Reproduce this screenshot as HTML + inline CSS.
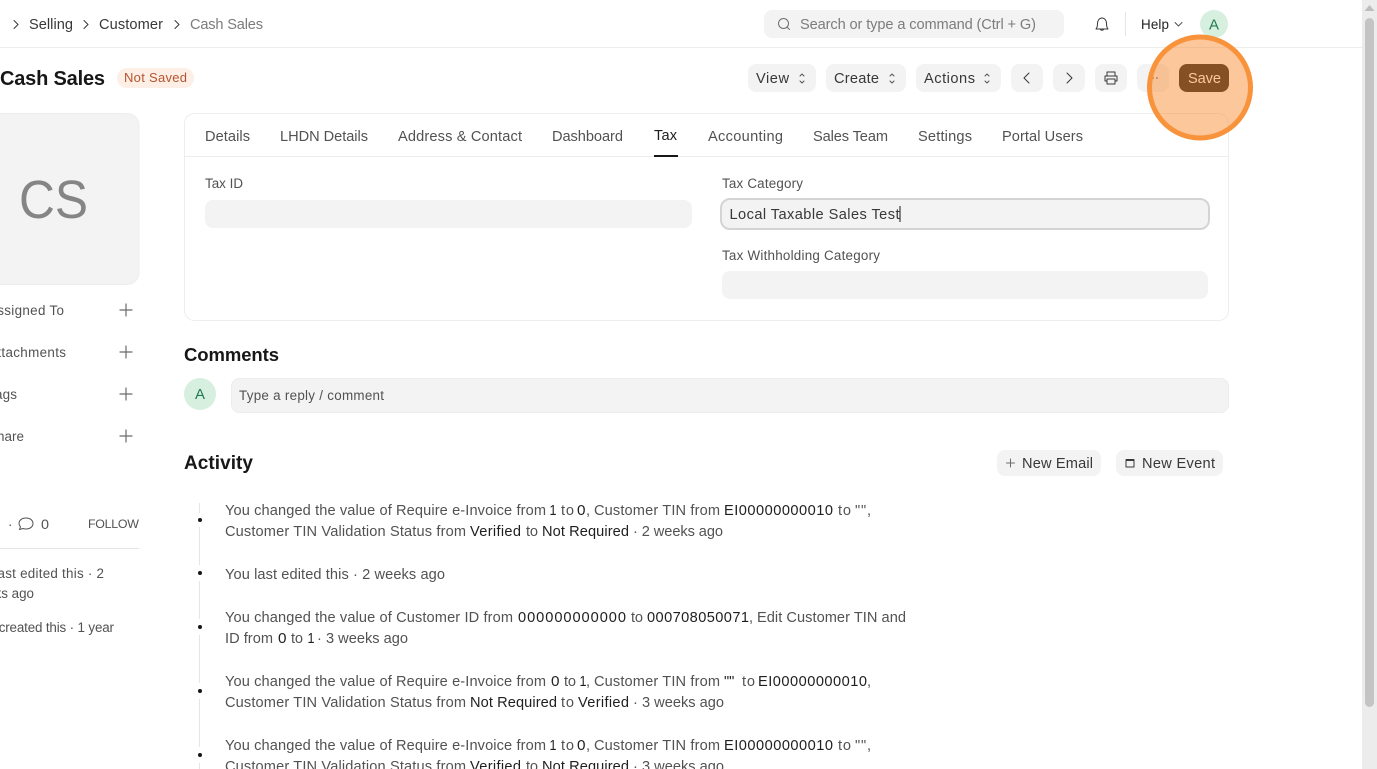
<!DOCTYPE html>
<html><head><meta charset="utf-8"><title>Cash Sales</title>
<style>
html,body{margin:0;padding:0;background:#fff;overflow:hidden;width:1377px;height:769px}
svg{display:block;position:absolute;left:0;top:0}
text{font-family:"Liberation Sans",sans-serif;font-size:14.6px;fill:#525252}
.d{fill:#1f1f1f}
.k{fill:#383838}
.g{fill:#7c7c7c}
.s{font-size:13.4px}
.b{font-weight:700;fill:#171717}
.i{fill:none;stroke:#525252;stroke-width:1;stroke-linecap:round;stroke-linejoin:round}
.f{fill:#f3f3f3}
</style></head><body>
<svg width="1377" height="769" viewBox="0 0 1377 769" xmlns="http://www.w3.org/2000/svg">
<rect width="1377" height="769" fill="#fff"/>
<!-- navbar -->
<rect x="0" y="47" width="1362" height="1" fill="#ededed"/>
<path class="i" style="stroke:#383838" d="M14 20.500l4 4-4 4M84 20.500l4 4-4 4M175 20.500l4 4-4 4"/>
<text class="k" x="29" y="29" textLength="44" lengthAdjust="spacing">Selling</text>
<text class="k" x="99" y="29" textLength="64" lengthAdjust="spacing">Customer</text>
<text class="g" x="190" y="29" textLength="73" lengthAdjust="spacing">Cash Sales</text>
<rect class="f" x="764" y="10" width="300" height="28" rx="8"/>
<circle class="i" cx="783.500" cy="23.500" r="5" style="stroke:#6f6f6f"/><path class="i" style="stroke:#6f6f6f" d="M787 27l2.500 2.500"/>
<text class="g" x="800" y="29" textLength="236" lengthAdjust="spacing">Search or type a command (Ctrl + G)</text>
<path class="i" style="stroke:#383838" d="M1096 29h12c-1.300-1.500-1.500-3-1.500-5.500 0-3-1.800-5.500-4.500-5.500s-4.500 2.500-4.500 5.500c0 2.500-.2 4-1.500 5.500zM1100.500 29.500c.3 1 2.700 1 3 0"/>
<rect x="1125" y="12" width="1" height="24" fill="#e5e5e5"/>
<text class="d" x="1141" y="29" textLength="28" lengthAdjust="spacing" style="font-size:13.400px">Help</text>
<path class="i" d="M1175 22.500l3.500 3.500 3.500-3.500"/>
<circle cx="1214" cy="24" r="14" fill="#d6efdf"/>
<text x="1209" y="29.500" textLength="10" lengthAdjust="spacingAndGlyphs" style="fill:#217a50">A</text>
<!-- page head -->
<text class="b" x="0" y="85" textLength="105" lengthAdjust="spacing" style="font-size:20px">Cash Sales</text>
<rect x="117" y="68" width="77" height="20" rx="10" fill="#fdeee6"/>
<text x="124" y="82" textLength="63" lengthAdjust="spacing" style="font-size:13px;fill:#b4562f">Not Saved</text>
<rect class="f" x="748" y="64" width="68" height="28" rx="8"/>
<text class="k" x="756" y="83" textLength="33" lengthAdjust="spacing">View</text>
<path class="i" d="M800 76l2-2 2 2M800 81l2 2 2-2"/>
<rect class="f" x="826" y="64" width="80" height="28" rx="8"/>
<text class="k" x="834" y="83" textLength="45" lengthAdjust="spacing">Create</text>
<path class="i" d="M890 76l2-2 2 2M890 81l2 2 2-2"/>
<rect class="f" x="916" y="64" width="85" height="28" rx="8"/>
<text class="k" x="924" y="83" textLength="51" lengthAdjust="spacing">Actions</text>
<path class="i" d="M985 76l2-2 2 2M985 81l2 2 2-2"/>
<rect class="f" x="1011" y="64" width="32" height="28" rx="8"/>
<path class="i" style="stroke:#383838" d="M1029 73l-5 5 5 5"/>
<rect class="f" x="1053" y="64" width="32" height="28" rx="8"/>
<path class="i" style="stroke:#383838" d="M1067 73l5 5-5 5"/>
<rect class="f" x="1095" y="64" width="32" height="28" rx="8"/>
<path class="i" style="stroke:#383838" d="M1107 76v-4h8v4M1107 81h-2v-5h12v5h-2M1107 79h8v5h-8z"/>
<rect class="f" x="1137" y="64" width="32" height="28" rx="8"/>
<circle cx="1153" cy="78" r=".8" fill="#383838"/><circle cx="1157" cy="78" r=".8" fill="#383838"/>
<rect x="1179" y="64" width="50" height="28" rx="8" fill="#171717"/>
<text x="1188" y="83" textLength="33" lengthAdjust="spacing" style="fill:#fff">Save</text>
<!-- left sidebar -->
<rect x="-20" y="113.500" width="159" height="171" rx="12" fill="#f3f3f3" stroke="#ededed"/>
<text x="19" y="218" textLength="69" lengthAdjust="spacingAndGlyphs" style="font-size:54px;fill:#858585">CS</text>
<text x="-12" y="315" textLength="76" lengthAdjust="spacing" class="s">Assigned To</text>
<text x="-12" y="357" textLength="78" lengthAdjust="spacing" class="s">Attachments</text>
<text x="-12" y="399" textLength="29" lengthAdjust="spacing" class="s">Tags</text>
<text x="-12" y="441" textLength="36" lengthAdjust="spacing" class="s">Share</text>
<path class="i" style="stroke:#6b6b6b;stroke-width:1.200" d="M120 310h12M126 304v12M120 352h12M126 346v12M120 394h12M126 388v12M120 436h12M126 430v12"/>
<text x="8" y="529" class="s">·</text>
<path class="i" d="M26 518c4 0 7 2.300 7 5.500s-3 5.500-7 5.500c-1 0-2-.1-3-.5l-3.500 1 1-2.800c-1-1-1.500-2.200-1.500-3.200 0-3.200 3-5.500 7-5.500z"/>
<text x="41" y="529" textLength="8" lengthAdjust="spacingAndGlyphs" class="s">0</text>
<text x="88" y="528" textLength="51" lengthAdjust="spacing" style="font-size:12.400px">FOLLOW</text>
<rect x="0" y="548" width="139" height="1" fill="#e5e5e5"/>
<text x="-33" y="578" textLength="137" lengthAdjust="spacing" class="s">You last edited this · 2</text>
<text x="-30" y="598" textLength="64" lengthAdjust="spacing" class="s">weeks ago</text>
<text x="-27" y="632" textLength="141" lengthAdjust="spacing" class="s">You created this · 1 year</text>
<!-- form card -->
<rect x="184.500" y="113.500" width="1044" height="207" rx="10" fill="#fff" stroke="#ededed"/>
<rect x="185" y="156" width="1043" height="1" fill="#ededed"/>
<text x="205" y="141" textLength="45" lengthAdjust="spacing">Details</text>
<text x="280" y="141" textLength="88" lengthAdjust="spacing">LHDN Details</text>
<text x="398" y="141" textLength="124" lengthAdjust="spacing">Address &amp; Contact</text>
<text x="552" y="141" textLength="71" lengthAdjust="spacing">Dashboard</text>
<text class="d" x="654" y="140" textLength="23" lengthAdjust="spacing">Tax</text>
<rect x="654" y="155" width="24" height="2" fill="#171717"/>
<text x="708" y="141" textLength="75" lengthAdjust="spacing">Accounting</text>
<text x="813" y="141" textLength="75" lengthAdjust="spacing">Sales Team</text>
<text x="918" y="141" textLength="54" lengthAdjust="spacing">Settings</text>
<text x="1002" y="141" textLength="81" lengthAdjust="spacing">Portal Users</text>
<text class="s" x="205" y="188" textLength="38" lengthAdjust="spacing">Tax ID</text>
<rect class="f" x="205" y="200" width="487" height="28" rx="8"/>
<text class="s" x="722" y="188" textLength="81" lengthAdjust="spacing">Tax Category</text>
<rect x="721" y="199" width="488" height="30" rx="9" fill="#f3f3f3" stroke="#d4d4d4" stroke-width="2"/>
<text class="k" x="729.500" y="219" textLength="170" lengthAdjust="spacing">Local Taxable Sales Test</text>
<rect x="899.500" y="206" width="1" height="16" fill="#171717"/>
<text class="s" x="722" y="260" textLength="158" lengthAdjust="spacing">Tax Withholding Category</text>
<rect class="f" x="722" y="271" width="486" height="28" rx="8"/>
<!-- comments -->
<text class="b" x="184" y="361" textLength="95" lengthAdjust="spacing" style="font-size:18.500px">Comments</text>
<circle cx="200" cy="394" r="16" fill="#d6efdf"/>
<text x="195" y="399" textLength="10" lengthAdjust="spacingAndGlyphs" style="fill:#217a50">A</text>
<rect x="231.500" y="378.500" width="997" height="34" rx="8" fill="#f3f3f3" stroke="#ededed"/>
<text class="s" x="239" y="400" textLength="145" lengthAdjust="spacing">Type a reply / comment</text>
<!-- activity -->
<text class="b" x="184" y="469" textLength="69" lengthAdjust="spacing" style="font-size:19px">Activity</text>
<rect class="f" x="997" y="450" width="104" height="26" rx="8"/>
<path class="i" style="stroke:#6b6b6b" d="M1006.500 463h8M1010.500 459v8"/>
<text class="k" x="1022" y="468" textLength="71" lengthAdjust="spacing">New Email</text>
<rect class="f" x="1116" y="450" width="107" height="26" rx="8"/>
<path class="i" style="stroke:#383838" d="M1126 460.500h8v6.500h-8zM1126 459.500h8"/>
<text class="k" x="1142" y="468" textLength="73" lengthAdjust="spacing">New Event</text>
<!-- timeline -->
<path d="M199.500 503v10M199.500 527v38M199.500 581v38M199.500 635v48M199.500 699v48M199.500 763v6" stroke="#e5e5e5" stroke-width="1" fill="none"/>
<circle cx="200" cy="520" r="2" fill="#171717"/><circle cx="200" cy="573" r="2" fill="#171717"/><circle cx="200" cy="627" r="2" fill="#171717"/><circle cx="200" cy="691" r="2" fill="#171717"/><circle cx="200" cy="755" r="2" fill="#171717"/>
<!-- entry 1 -->
<text x="225" y="515" textLength="321" lengthAdjust="spacing">You changed the value of Require e-Invoice from</text>
<text class="d" x="549.500" y="515" textLength="7" lengthAdjust="spacingAndGlyphs">1</text>
<text x="561" y="515" textLength="13" lengthAdjust="spacing">to</text>
<text class="d" x="577" y="515" textLength="8.500" lengthAdjust="spacingAndGlyphs">0</text><text x="586" y="515">,</text>
<text x="594" y="515" textLength="126" lengthAdjust="spacing">Customer TIN from</text>
<text class="d" x="724" y="515" textLength="109" lengthAdjust="spacing">EI00000000010</text>
<text x="838" y="515" textLength="13" lengthAdjust="spacing">to</text>
<text x="855" y="515" textLength="16" lengthAdjust="spacing">"",</text>
<text x="225" y="536" textLength="241" lengthAdjust="spacing">Customer TIN Validation Status from</text>
<text class="d" x="470" y="536" textLength="51" lengthAdjust="spacing">Verified</text>
<text x="526" y="536" textLength="12" lengthAdjust="spacing">to</text>
<text class="d" x="542" y="536" textLength="87" lengthAdjust="spacing">Not Required</text>
<text x="633" y="536" textLength="90" lengthAdjust="spacing">· 2 weeks ago</text>
<!-- entry 2 -->
<text x="225" y="579" textLength="220" lengthAdjust="spacing">You last edited this · 2 weeks ago</text>
<!-- entry 3 -->
<text x="225" y="622" textLength="288" lengthAdjust="spacing">You changed the value of Customer ID from</text>
<text class="d" x="518" y="622" textLength="108" lengthAdjust="spacing">000000000000</text>
<text x="631" y="622" textLength="12" lengthAdjust="spacing">to</text>
<text class="d" x="647" y="622" textLength="102" lengthAdjust="spacing">000708050071</text><text x="749" y="622">,</text>
<text x="757" y="622" textLength="149" lengthAdjust="spacing">Edit Customer TIN and</text>
<text x="225" y="643" textLength="48" lengthAdjust="spacing">ID from</text>
<text class="d" x="278" y="643" textLength="8.500" lengthAdjust="spacingAndGlyphs">0</text>
<text x="291" y="643" textLength="12" lengthAdjust="spacing">to</text>
<text class="d" x="307.500" y="643" textLength="7" lengthAdjust="spacingAndGlyphs">1</text>
<text x="317" y="643" textLength="91" lengthAdjust="spacing">· 3 weeks ago</text>
<!-- entry 4 -->
<text x="225" y="686" textLength="321" lengthAdjust="spacing">You changed the value of Require e-Invoice from</text>
<text class="d" x="551" y="686" textLength="8.500" lengthAdjust="spacingAndGlyphs">0</text>
<text x="564" y="686" textLength="12" lengthAdjust="spacing">to</text>
<text class="d" x="579.500" y="686" textLength="7" lengthAdjust="spacingAndGlyphs">1</text><text x="586" y="686">,</text>
<text x="594" y="686" textLength="126" lengthAdjust="spacing">Customer TIN from</text>
<text class="d" x="724" y="686">""</text>
<text x="742" y="686" textLength="13" lengthAdjust="spacing">to</text>
<text class="d" x="758" y="686" textLength="109" lengthAdjust="spacing">EI00000000010</text><text x="867" y="686">,</text>
<text x="225" y="707" textLength="241" lengthAdjust="spacing">Customer TIN Validation Status from</text>
<text class="d" x="470" y="707" textLength="87" lengthAdjust="spacing">Not Required</text>
<text x="561" y="707" textLength="13" lengthAdjust="spacing">to</text>
<text class="d" x="578" y="707" textLength="51" lengthAdjust="spacing">Verified</text>
<text x="633" y="707" textLength="91" lengthAdjust="spacing">· 3 weeks ago</text>
<!-- entry 5 -->
<text x="225" y="750" textLength="321" lengthAdjust="spacing">You changed the value of Require e-Invoice from</text>
<text class="d" x="549.500" y="750" textLength="7" lengthAdjust="spacingAndGlyphs">1</text>
<text x="561" y="750" textLength="13" lengthAdjust="spacing">to</text>
<text class="d" x="577" y="750" textLength="8.500" lengthAdjust="spacingAndGlyphs">0</text><text x="586" y="750">,</text>
<text x="594" y="750" textLength="126" lengthAdjust="spacing">Customer TIN from</text>
<text class="d" x="724" y="750" textLength="109" lengthAdjust="spacing">EI00000000010</text>
<text x="838" y="750" textLength="13" lengthAdjust="spacing">to</text>
<text x="855" y="750" textLength="16" lengthAdjust="spacing">"",</text>
<text x="225" y="771" textLength="241" lengthAdjust="spacing">Customer TIN Validation Status from</text>
<text class="d" x="470" y="771" textLength="51" lengthAdjust="spacing">Verified</text>
<text x="526" y="771" textLength="12" lengthAdjust="spacing">to</text>
<text class="d" x="542" y="771" textLength="87" lengthAdjust="spacing">Not Required</text>
<text x="633" y="771" textLength="91" lengthAdjust="spacing">· 3 weeks ago</text>
<!-- highlight -->
<circle cx="1200" cy="87.500" r="50.500" fill="rgba(249,141,51,.49)" stroke="#f8933c" stroke-width="5"/>
<!-- scrollbar -->
<rect x="1362" y="0" width="15" height="769" fill="#ececec"/>
<path d="M1369.500 5l5 6h-10z" fill="#bdbdbd"/>
<rect x="1365" y="18" width="9" height="689" rx="4.500" fill="#c4c4c4"/>
</svg>
</body></html>
